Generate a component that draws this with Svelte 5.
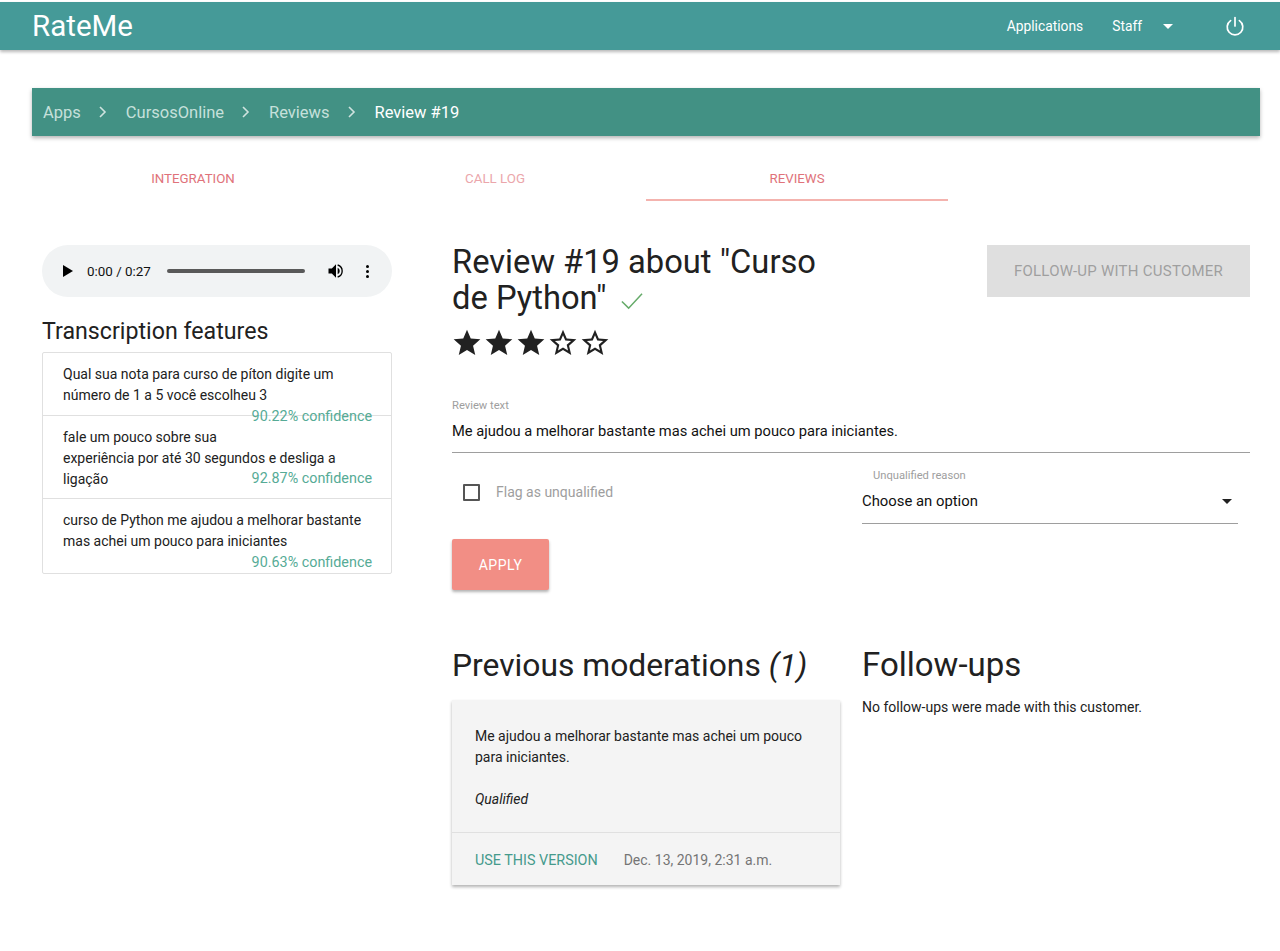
<script>
  const crumbs = ['Apps', 'CursosOnline', 'Reviews'];
  const tabs = [
    { label: 'INTEGRATION', cls: '' },
    { label: 'CALL LOG', cls: 'faded' },
    { label: 'REVIEWS', cls: 'active' }
  ];
  const features = [
    { text: 'Qual sua nota para curso de píton digite um número de 1 a 5 você escolheu 3', conf: '90.22% confidence', cls: '' },
    { text: 'fale um pouco sobre sua\nexperiência por até 30 segundos e desliga a ligação', conf: '92.87% confidence', cls: 'mid' },
    { text: 'curso de Python me ajudou a melhorar bastante mas achei um pouco para iniciantes', conf: '90.63% confidence', cls: 'last' }
  ];
  const stars = [true, true, true, false, false];
  const starFull = 'M12 17.27L18.18 21l-1.64-7.03L22 9.24l-7.19-.61L12 2 9.19 8.63 2 9.24l5.46 4.73L5.82 21z';
  const starEmpty = 'M22 9.24l-7.19-.62L12 2 9.19 8.63 2 9.24l5.46 4.73L5.82 21 12 17.27 18.18 21l-1.63-7.03L22 9.24zM12 15.4l-3.76 2.27 1-4.28-3.32-2.88 4.38-.38L12 6.1l1.71 4.04 4.38.38-3.32 2.88 1 4.28L12 15.4z';
</script>

<div class="page">
  <nav class="nav">
    <span class="brand">RateMe</span>
    <div class="nav-right">
      <span class="nav-link">Applications</span>
      <span class="nav-link staff">Staff</span>
      <span class="caret white"></span>
      <svg class="power" viewBox="0 0 24 24" width="24" height="24" fill="none" stroke="#fff" stroke-width="1.7" stroke-linecap="round">
        <path d="M12 3.5v8.5" />
        <path d="M7.6 6.6a7.8 7.8 0 1 0 8.8 0" />
      </svg>
    </div>
  </nav>

  <div class="crumbs">
    {#each crumbs as c}
      <span class="crumb">{c}</span>
      <svg class="chev" viewBox="0 0 10 14" width="10" height="14" fill="none" stroke="#cfe3df" stroke-width="1.6"><path d="M2 2l5 5-5 5" /></svg>
    {/each}
    <span class="crumb current">Review #19</span>
  </div>

  <div class="tabs">
    {#each tabs as t}
      <div class="tab {t.cls}">{t.label}</div>
    {/each}
  </div>

  <main class="main">
    <aside class="left">
      <div class="audio">
        <svg viewBox="0 0 10 12" width="10" height="12"><path d="M0 0l10 6-10 6z" fill="#000" /></svg>
        <span class="time">0:00 / 0:27</span>
        <span class="track"></span>
        <svg class="vol" viewBox="0 0 24 24" width="20" height="20"><path fill="#000" d="M3 9v6h4l5 5V4L7 9H3zm13.5 3A4.5 4.5 0 0 0 14 8v8a4.5 4.5 0 0 0 2.5-4z" /><path fill="none" stroke="#000" stroke-width="1.6" d="M14 4.8a7.5 7.5 0 0 1 0 14.4" /></svg>
        <span class="dots"><i></i><i></i><i></i></span>
      </div>
      <h2 class="tf">Transcription features</h2>
      <ul class="list">
        {#each features as f}
          <li class="item {f.cls}"><span class="t">{f.text}</span><span class="conf">{f.conf}</span></li>
        {/each}
      </ul>
    </aside>

    <section class="right">
      <div class="head">
        <div class="head-l">
          <h1 class="title">Review #19 about "Curso de Python"
            <svg class="check" viewBox="0 0 24 24" width="23" height="23" fill="none" stroke="#66ab6a" stroke-width="1.6"><path d="M2 13l7 7L23 5" /></svg>
          </h1>
          <div class="stars">
            {#each stars as s}
              <svg viewBox="0 0 24 24" width="32" height="32"><path fill="#212121" d={s ? starFull : starEmpty} /></svg>
            {/each}
          </div>
        </div>
        <div class="followup">FOLLOW-UP WITH CUSTOMER</div>
      </div>

      <div class="field">
        <div class="label">Review text</div>
        <div class="value">Me ajudou a melhorar bastante mas achei um pouco para iniciantes.</div>
      </div>

      <div class="flags">
        <div class="flag">
          <span class="box"></span>
          <span class="flag-label">Flag as unqualified</span>
        </div>
        <div class="select">
          <div class="label sel-label">Unqualified reason</div>
          <div class="sel-value"><span>Choose an option</span><span class="caret"></span></div>
        </div>
      </div>

      <div class="apply">APPLY</div>

      <div class="lower">
        <div class="mods">
          <h2 class="h2">Previous moderations <em>(1)</em></h2>
          <div class="card">
            <div class="card-body">
              <p>Me ajudou a melhorar bastante mas achei um pouco para iniciantes.</p>
              <p class="q">Qualified</p>
            </div>
            <div class="card-foot">
              <span class="use">USE THIS VERSION</span>
              <span class="date">Dec. 13, 2019, 2:31 a.m.</span>
            </div>
          </div>
        </div>
        <div class="fups">
          <h2 class="h2 fu">Follow-ups</h2>
          <p class="none">No follow-ups were made with this customer.</p>
        </div>
      </div>
    </section>
  </main>
</div>

<style>
  :global(body) { margin: 0; background: #fff; }
  .page { height: 951px; overflow: hidden; font-family: Roboto, "Liberation Sans", sans-serif; color: #212121; padding-top: 2px; box-sizing: border-box; }
  .nav { height: 48px; background: #459a98; box-shadow: 0 2px 3px rgba(0,0,0,.28); display: flex; align-items: center; justify-content: space-between; padding: 0 33px 0 32px; color: #fff; }
  .brand { font-size: 29.5px; line-height: 48px; }
  .nav-right { display: flex; align-items: center; font-size: 13.8px; }
  .staff { margin-left: 29px; }
  .caret { display: inline-block; width: 0; height: 0; border-left: 5px solid transparent; border-right: 5px solid transparent; border-top: 5px solid #212121; }
  .caret.white { border-top-color: #fff; margin-left: 21px; }
  .power { margin-left: 50px; }

  .crumbs { margin: 38px 20px 0 32px; height: 48px; background: #429184; box-shadow: 0 2px 4px rgba(0,0,0,.3); display: flex; align-items: center; padding-left: 11px; font-size: 16.5px; }
  .crumb { color: #c6e0db; }
  .crumb.current { color: #fff; }
  .chev { margin: 0 18px 0 17px; }

  .tabs { margin: 17px 0 0 42px; display: flex; height: 48px; }
  .tab { width: 302px; box-sizing: border-box; font-size: 13.3px; line-height: 52px; text-align: center; color: #e0727a; }
  .tab.faded { color: #eba6ab; }
  .tab.active { border-bottom: 2px solid #f4b3ae; }

  .main { display: grid; grid-template-columns: 350px 798px; column-gap: 60px; padding: 44px 0 0 42px; }
  .audio { height: 52px; border-radius: 26px; background: #f1f3f4; display: flex; align-items: center; padding-left: 21px; box-sizing: border-box; }
  .time { font-size: 13.4px; margin-left: 14px; color: #111; }
  .track { width: 138px; height: 4px; border-radius: 2px; background: #595959; margin-left: 16px; }
  .vol { margin-left: 21px; }
  .dots { display: flex; flex-direction: column; gap: 2px; margin-left: 20px; }
  .dots i { display: block; width: 3px; height: 3px; border-radius: 50%; background: #000; }
  .tf { font-size: 23.2px; font-weight: 400; line-height: 28px; margin: 20px 0 7px; }
  .list { list-style: none; margin: 0; padding: 0; border: 1px solid #e0e0e0; border-radius: 2px; font-size: 14px; line-height: 21px; }
  .item { padding: 11px 19px 9px 20px; border-bottom: 1px solid #e0e0e0; white-space: pre-line; }
  .item.mid { padding-bottom: 8px; }
  .item.mid .conf { margin-top: -1px; }
  .item.last { border-bottom: 0; padding-bottom: 0; display: flow-root; }
  .conf { float: right; color: #56ab96; white-space: nowrap; font-size: 14.35px; }
  .t { display: inline; }

  .head { display: flex; justify-content: space-between; align-items: flex-start; }
  .head-l { width: 385px; }
  .title { margin: -1px 0 0; font-size: 32.7px; font-weight: 400; line-height: 36px; }
  .check { vertical-align: -3px; margin-left: 5px; }
  .stars { display: flex; margin: 11px 0 0 -1px; gap: 0; }
  .followup { width: 263px; height: 52px; line-height: 52px; background: #dfdfdf; color: #9f9f9f; font-size: 15px; letter-spacing: .25px; text-align: center; }

  .field { margin-top: 39px; border-bottom: 1px solid #9e9e9e; height: 54px; }
  .label { font-size: 11.2px; color: #9e9e9e; line-height: 16px; }
  .value { font-size: 14.7px; line-height: 24px; margin-top: 5px; color: #111; }

  .flags { display: grid; grid-template-columns: 410px 376px; padding-top: 1px; }
  .flag { display: flex; align-items: center; padding: 30px 0 0 11px; height: 16px; }
  .box { width: 17px; height: 17px; box-sizing: border-box; border: 2px solid #555; border-radius: 1px; }
  .flag-label { font-size: 14px; color: #9e9e9e; margin-left: 16px; }
  .select { padding-top: 14px; }
  .sel-label { padding-left: 11px; }
  .sel-value { height: 41px; border-bottom: 1px solid #9e9e9e; display: flex; align-items: center; justify-content: space-between; padding: 0 6px 4px 0; box-sizing: border-box; font-size: 14.85px; color: #111; margin-top: -1px; }

  .apply { width: 97px; height: 51px; line-height: 52px; margin-top: 15px; background: #f28e85; color: #fff; font-size: 14px; letter-spacing: .5px; text-align: center; border-radius: 2px; box-shadow: 0 2px 3px rgba(0,0,0,.3); }

  .lower { display: grid; grid-template-columns: 388px 1fr; column-gap: 22px; margin-top: 55px; }
  .h2 { margin: 0; font-size: 31.8px; font-weight: 400; line-height: 40px; white-space: nowrap; }
  .h2.fu { font-size: 33px; }
  .card { margin-top: 15px; background: #f4f4f4; box-shadow: 0 2px 3px rgba(0,0,0,.3); font-size: 14px; line-height: 21px; }
  .card-body { padding: 26px 23px 22px; height: 84px; border-bottom: 1px solid #e0e0e0; }
  .card-body p { margin: 0; }
  .card-body .q { margin-top: 21px; font-style: italic; }
  .card-foot { height: 50px; padding-top: 2px; display: flex; align-items: center; padding-left: 23px; }
  .use { color: #459a8c; font-size: 14.35px; }
  .date { color: #757575; margin-left: 26px; }
  .none { margin: 12px 0 0; font-size: 14px; line-height: 21px; }
</style>
